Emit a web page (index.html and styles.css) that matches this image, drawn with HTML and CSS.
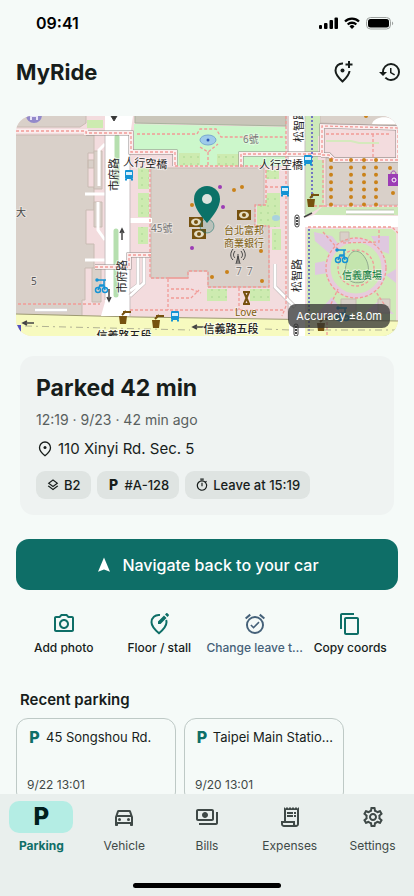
FILE: index.html
```html
<!DOCTYPE html>
<html lang="en">
<head>
    <meta charset="UTF-8">
    <meta name="viewport" content="width=device-width, initial-scale=1.0">
    <title>MyRide</title>
    <link rel="stylesheet" href="styles.css">
</head>
<body>
    <div class="status-bar">
        <span class="time">09:41</span>
        <svg class="status-icons" viewBox="0 0 76 14" aria-hidden="true">
            <rect x="0" y="9" width="3" height="4" rx="1"/>
            <rect x="5" y="7" width="3.500" height="6" rx="1"/>
            <rect x="10.500" y="4" width="3.500" height="9" rx="1"/>
            <rect x="15.500" y="1.500" width="3.500" height="11.500" rx="1"/>
            <g fill="none" stroke="#000" stroke-width="2.300">
                <path d="M26 5.500a10 10 0 0 1 14 0"/>
                <path d="M28.700 8.500a6.200 6.200 0 0 1 8.600 0"/>
            </g>
            <path d="M33 13l-2.500-2.600a3.500 3.500 0 0 1 5 0z"/>
            <rect x="47.500" y="1.500" width="24" height="11.500" rx="4" fill="none" stroke="#9da19f"/>
            <rect x="49" y="3" width="21" height="8.500" rx="2.500"/>
            <path d="M73 5.500c1.600.5 1.600 3.300 0 3.800z" fill="#9da19f"/>
        </svg>
    </div>

    <header class="app-bar">
        <h1>MyRide</h1>
        <button type="button" class="icon-button" aria-label="Add parking spot">
            <svg class="icon" viewBox="0 0 24 24"><path d="M13 3.500c-4.300-.3-7.500 2.700-7.500 7 0 3.400 2.500 6.800 7 11 4.300-4 6.800-7.400 7-10.500M19 1v7M15.500 4.500h7" fill="none" stroke="currentColor" stroke-width="2"/><circle cx="12.500" cy="10.500" r="2"/></svg>
        </button>
        <button type="button" class="icon-button" aria-label="History">
            <svg class="icon" viewBox="0 0 24 24"><path d="M13 3a9 9 0 0 0-9 9H1l4 4 4-4H6c0-3.870 3.130-7 7-7s7 3.130 7 7-3.130 7-7 7c-1.930 0-3.680-.79-4.940-2.060l-1.420 1.420A8.950 8.950 0 0 0 13 21a9 9 0 0 0 0-18zm-1 5v5l4.280 2.540.72-1.210-3.500-2.080V8H12z"/></svg>
        </button>
    </header>

    <main>
        <section class="map" aria-label="Parking location">
            <svg class="map-tiles" viewBox="16 116 382 220" preserveAspectRatio="xMidYMid slice">
                <defs>
                    <g id="bus"><rect x="-4" y="-5" width="8" height="9" rx="1" fill="#1593d4"/><path d="M-3-3h6v3h-6z" fill="#d6effb"/><path d="M-3 4v1.500M3 4v1.500" stroke="#1593d4" stroke-width="2"/></g>
                    <g id="bike" fill="none" stroke="#1593d4" stroke-width="1.500"><circle cx="-3" cy="4" r="2.500"/><circle cx="4" cy="4" r="2.500"/><path d="M-3 4l2-5h4l1 5M-2 0h5M-5-6h10M3-6v5"/><circle cx="-4" cy="-6" r="1"/></g>
                    <g id="money"><rect x="-7" y="-5" width="14" height="10" fill="#76510f"/><ellipse rx="5" ry="3.500" fill="#e5ddc4"/><circle r="2" fill="#76510f"/></g>
                    <g id="cup" fill="#76510f"><path d="M-4 0h8L3 8h-6z"/><path d="M-1-1l4-4M0-4h8" stroke="#76510f" stroke-width="2"/></g>
                    <g id="light"><rect x="-2" y="-6" width="4" height="12" rx="2" fill="#fff" stroke="#444"/><path d="M0-4v8" stroke="#444" stroke-width="2" stroke-dasharray="2 1"/></g>
                    <pattern id="trees" width="7" height="7" patternUnits="userSpaceOnUse"><rect width="7" height="7" fill="#cdebb0"/><circle cx="2" cy="3" r=".8" fill="#a5d68f"/></pattern>
                </defs>
                <path d="M16 116h382v220H16z" fill="#f3dcde"/>

                <!-- buildings on the west block -->
                <g fill="#d9d0c9" stroke="#c8bbb2">
                    <path d="M10 110h76v13l-6 4H10z"/>
                    <path d="M10 135h84v18h-6v15h6v-8h-6v27h6v23h-8v34h8v24h-9v32h-3v17h-6v3H10z"/>
                    <path d="M94 151h8v38h-8zM94 202h8v25h-8zM92 268h9v34h-9z"/>
                </g>
                <path d="M87 120h16v8H87z" fill="#cdebb0"/>
                <path d="M99 186v-36l6-6M98 202v28l7 10M85 194h20M85 260h20" fill="none" stroke="#fff" stroke-width="3"/>

                <!-- park -->
                <path d="M134 124l152 3v39h-111v-14h-41z" fill="#ccf7cb"/>
                <path d="M135 110h151v16l-151-3z" fill="#c9c5b9" stroke="#a9b39e"/>
                <path d="M179 153h21v12h-21zM217 154h26v12h-26zM138 168h11v21h-11zM138 193h11v24h-11zM138 227h10v17h-10zM266 170h13v9h-13z" fill="url(#trees)"/>
                <path d="M267 193h13v34h-23v-22h8zM272 229h9v21h-9zM207 289h20v12h-20zM250 289h20v12h-20z" fill="url(#trees)"/>
                <ellipse cx="208" cy="140" rx="8" ry="5" fill="#9ecbea" stroke="#78a9d0"/>
                <circle cx="208" cy="140" r="1.500" fill="#2754b3"/>
                <ellipse cx="276" cy="218" rx="4" ry="3" fill="#a9d2df"/>

                <!-- central building -->
                <path d="M151 168h113v37h-9v21h14v61h-61v-16h-20v7h-37z" fill="#d9d0c9" stroke="#c8bbb2"/>

                <!-- east block -->
                <g fill="#d9d0c9" stroke="#c8bbb2">
                    <path d="M320 110h85v16l-85-3z"/>
                    <path d="M326 158h74v47h-74z"/>
                </g>
                <path d="M305 116h15v20h-2v24h6v45l-19 12z" fill="#cde9ba"/>
                <path d="M326 141h25l8 2h20" stroke="#d5e9bd" stroke-width="2" fill="none"/>
                <path d="M372 124c2-9 22-9 24 0z" fill="#fff"/>
                <path d="M322 207h76v8h-84z" fill="#cde9ba"/>

                <!-- plaza -->
                <path d="M307 229h85l4 4v103h-89z" fill="#cfebb8"/>
                <path d="M314 232l18 4 8 10-10 8-15-13zM315 263l10-2 3 12-13 2zM371 236h18v18l-10-4zM386 275l10-6v14zM320 310l12-13 12 16-30 6zM365 312l15-12 14 14z" fill="#dfc8e0"/>
                <circle cx="356" cy="268" r="28" fill="none" stroke="#e7cbdc" stroke-width="5"/>
                <path d="M345 272c2-19 8-24 16-19 9 8 10 22 2 29-12 3-16-3-18-10z" fill="#c4e5ae" stroke="#91a98f"/>
                <path d="M340 232h9v9h-9zM341 299h15v12h-15zM378 299h12v14h-12z" fill="#d9d0c9" stroke="#c8bbb2"/>

                <!-- roads -->
                <path d="M16 314l120 3 262 4v15H16z" fill="#f7fabf"/>
                <path d="M16 314l120 3 262 4" stroke="#9d9a72" fill="none"/>
                <g fill="#fff">
                    <path d="M105 116h28l-3 20v180h-29l4-14zM289 116h16v220h-16z"/>
                    <path d="M128 218h24v5h-24zM300 219l14-4 84 1v11h-98z"/>
                </g>
                <path d="M288 116v203M305 116v98M105 135v165M130 136v180" stroke="#c8bfc0" fill="none"/>
                <path d="M144 257v26l-14 13M138 256v29l-8 6M35 310h32M275 264v23l20 20" fill="none" stroke="#b9b0b0" stroke-width="4"/>
                <path d="M144 257v26l-14 13M138 256v29l-8 6M35 310h32M275 264v23l20 20" fill="none" stroke="#fff" stroke-width="3"/>
                <path d="M346 212h48" stroke="#b9c4ac" stroke-width="5"/>
                <path d="M346 212h48" stroke="#fff" stroke-width="3"/>
                <path d="M117 137v46M116 231v64" stroke="#b6dfaf" stroke-width="5" stroke-linecap="round"/>

                <!-- covered walkways -->
                <g fill="none" stroke="#8d8786" stroke-width="5">
                    <path d="M86 133h45v19h44v14M95 267h34v-12h22M241 167v-13h81v-28l76 2v32h-64l-5-5h-8"/>
                </g>
                <g fill="none" stroke="#fbeeee" stroke-width="4">
                    <path d="M16 131h70v2h45v19h44v14M95 267h34v-12h22M241 167v-13h81v-28l76 2v32h-64l-5-5h-8"/>
                </g>
                <g fill="none" stroke="#f29a97" stroke-width="1.300" stroke-dasharray="3 2">
                    <path d="M16 131h70v2h45v19h44v14M95 267h34v-12h22M241 167v-13h81v-28l76 2v32h-64l-5-5h-8"/>
                    <path d="M137 134h60l3-5h16l5 8h65M200 147l8 5 10-8M208 152v14M175 166h91v39h-11v21h14v61h-61v-16h-20v7h-38V168M286 116v190l-4 10M187 278h-19v32M130 310h154M18 304h82M239 288v22M265 187h20"/>
                    <path d="M323 160v47M326 134h65M373 134v24M314 206h84M308 227h84l6 6M323 232l15 17M331 304l7-15M379 230v12l-38 1M384 304l-8-12M327 335v-22"/>
                    <circle cx="356" cy="268" r="30"/><circle cx="356" cy="268" r="18"/>
                    <path d="M171 289h20l10 4M171 298h20l8-8"/>
                </g>
                <path d="M309 229v105M312 116v85" fill="none" stroke="#544fc4" stroke-width="1.500" stroke-dasharray="2 2"/>
                <path d="M25 326l165 4M265 329l25 1M307 330h90" fill="none" stroke="#b1b293" stroke-dasharray="7 4 2 4"/>

                <!-- street trees and other points -->
                <g fill="none" stroke="#ca821a" stroke-width="4" stroke-linecap="round" stroke-dasharray="0 7.400">
                    <path d="M331 160v45M351 160v45M364 160v45M376 160v45"/>
                </g>
                <g fill="#ca821a">
                    <circle cx="192" cy="205" r="2"/><circle cx="234" cy="190" r="2"/><circle cx="242" cy="187" r="2"/><circle cx="212" cy="277" r="2"/><circle cx="227" cy="272" r="2"/><circle cx="261" cy="251" r="2"/><circle cx="262" cy="281" r="2"/><circle cx="366" cy="116" r="2"/><circle cx="393" cy="193" r="2"/><circle cx="390" cy="168" r="2"/>
                </g>
                <g fill="#9c3cb5"><circle cx="220" cy="187" r="2"/><circle cx="223" cy="207" r="2"/><circle cx="192" cy="248" r="2"/><path d="M388 174h10v12h-10z"/><circle cx="34" cy="115" r="8" fill="#9389ca"/></g>
                <path d="M391 174c0-4 5-4 5 0" fill="none" stroke="#9c3cb5"/>
                <circle cx="394" cy="180" r="2" fill="none" stroke="#fff"/>
                <path d="M31 112v8m0-4h6m0-4v8" stroke="#e9e3f7" stroke-width="2" fill="none"/>
                <path d="M17 325h4v8z" fill="#544fc4"/>

                <use href="#bus" x="129" y="175"/><use href="#bus" x="308" y="160"/><use href="#bus" x="285" y="191"/><use href="#bus" x="175" y="316"/>
                <use href="#bike" x="101" y="286"/><use href="#bike" x="341" y="256"/><use href="#bike" x="342" y="314"/>
                <use href="#money" x="196" y="222"/><use href="#money" x="199" y="234"/><use href="#money" x="244" y="215"/>
                <use href="#cup" x="123" y="316"/><use href="#cup" x="156" y="320"/><use href="#cup" x="311" y="199"/><use href="#cup" x="321" y="323"/>
                <use href="#light" x="297" y="221"/><use href="#light" x="296" y="330"/>
                <g fill="none" stroke="#444">
                    <path d="M111 116h6l-3 5z" fill="#333"/>
                    <path d="M122 240v-10m-2 3l2-4 2 4M109 289v11m-2-3l2 4 2-4M34 323H23m4-2l-4 2 4 2M205 327h-12m4-2l-4 2 4 2M312 213l-8 4" stroke-width="1.500"/>
                    <path d="M238 254v10m-2 0l2-8 2 8M235 251c-2 3-2 5 0 7M241 251c2 3 2 5 0 7M233 249c-3 4-3 8 0 11M243 249c3 4 3 8 0 11"/>
                </g>
                <path d="M243 292h7M243 304h7M244 292l5 12M249 292l-5 12" stroke="#76510f" stroke-width="2"/>

                <g class="map-label">
                    <text x="145" y="167" transform="rotate(4 145 167)" text-anchor="middle">人行空橋</text>
                    <text x="281" y="169" text-anchor="middle">人行空橋</text>
                    <text x="231" y="333" text-anchor="middle" font-weight="500">信義路五段</text>
                    <text x="124" y="340" text-anchor="middle" font-weight="500">信義路五段</text>
                    <text x="118" y="191" transform="rotate(-90 118 191)">市府路</text>
                    <text x="126" y="293" transform="rotate(-90 126 293)">市府路</text>
                    <text x="303" y="142" transform="rotate(-90 303 142)">松智路</text>
                    <text x="301" y="292" transform="rotate(-90 301 292)">松智路</text>
                </g>
                <g class="place-label">
                    <text x="16" y="216" fill="#444">大</text>
                    <text x="31" y="285" fill="#555">5</text>
                    <text x="243" y="143" fill="#777">6號</text>
                    <text x="151" y="232" fill="#777">45號</text>
                    <text x="236" y="275" fill="#777">7</text>
                    <text x="247" y="275" fill="#777">7</text>
                    <text x="244" y="234" fill="#80600f" text-anchor="middle">台北富邦</text>
                    <text x="244" y="247" fill="#80600f" text-anchor="middle">商業銀行</text>
                    <text x="246" y="316" fill="#80600f" text-anchor="middle">Love</text>
                    <text x="362" y="279" fill="#137b42" text-anchor="middle">信義廣場</text>
                </g>

                <!-- parked car -->
                <circle cx="207" cy="226" r="7" fill="#0e6e67" fill-opacity=".15" stroke="#0e6e67" stroke-opacity=".5"/>
                <path d="M207 223c-7-8-13-16-13-24a13 13 0 0 1 26 0c0 8-6 16-13 24z" fill="#0b7268"/>
                <circle cx="207" cy="199" r="5" fill="#dce3de"/>
            </svg>
            <span class="accuracy">Accuracy ±8.0m</span>
        </section>

        <section class="parked">
            <h2>Parked 42 min</h2>
            <p class="since">12:19 · 9/23 · 42 min ago</p>
            <p class="address">
                <svg class="icon" viewBox="0 0 18 18" aria-hidden="true"><path d="M9 2a5.500 5.500 0 0 0-5.500 5.700c0 2.700 2.100 5.300 5.500 8 3.400-2.700 5.500-5.300 5.500-8A5.500 5.500 0 0 0 9 2z" fill="none" stroke="currentColor" stroke-width="1.300"/><circle cx="9" cy="7.500" r="1.500"/></svg>
                110 Xinyi Rd. Sec. 5
            </p>
            <ul class="chips">
                <li>
                    <svg class="icon" viewBox="0 0 24 24" aria-hidden="true"><path d="M12 18.540l-7.370-5.730L3 14.070l9 7 9-7-1.630-1.270L12 18.540zM12 16l7.360-5.730L21 9l-9-7-9 7 1.630 1.270L12 16zm0-11.470L17.740 9 12 13.470 6.260 9 12 4.530z"/></svg>
                    B2
                </li>
                <li><span class="p-mark">P</span>#A-128</li>
                <li>
                    <svg class="icon" viewBox="0 0 24 24" aria-hidden="true"><path d="M15 1H9v2h6V1zm-4 13h2V8h-2v6zm8.030-6.610l1.420-1.420c-.43-.51-.9-.99-1.410-1.410l-1.420 1.420A8.960 8.960 0 0 0 12 4c-4.970 0-9 4.030-9 9s4.020 9 9 9a9 9 0 0 0 7.030-14.610zM12 20c-3.870 0-7-3.130-7-7s3.130-7 7-7 7 3.130 7 7-3.130 7-7 7z"/></svg>
                    Leave at 15:19
                </li>
            </ul>
        </section>

        <button type="button" class="navigate">
            <svg class="icon" viewBox="0 0 24 24" aria-hidden="true"><path d="M12 2L4 21l8-3 8 3z"/></svg>
            Navigate back to your car
        </button>

        <div class="actions">
            <button type="button">
                <svg class="icon" viewBox="0 0 24 24" aria-hidden="true"><path d="M14.120 4l1.830 2H20v12H4V6h4.050l1.830-2h4.240M15 2H9L7.170 4H4c-1.100 0-2 .9-2 2v12c0 1.100.9 2 2 2h16c1.100 0 2-.9 2-2V6c0-1.100-.9-2-2-2h-3.170L15 2zm-3 7c1.650 0 3 1.350 3 3s-1.350 3-3 3-3-1.350-3-3 1.350-3 3-3m0-2c-2.760 0-5 2.240-5 5s2.240 5 5 5 5-2.240 5-5-2.240-5-5-5z"/></svg>
                <span>Add photo</span>
            </button>
            <button type="button">
                <svg class="icon" viewBox="0 0 24 24" aria-hidden="true"><path d="M13 3C8 2.400 4.500 5.700 4.500 10.200c0 3.500 2.500 6.800 7.500 11 5-4.200 7.500-7.500 7.500-11 0-1-.1-1.500-.4-2.200" fill="none" stroke="currentColor" stroke-width="2"/><path d="M11 9.500V12h2.500l6-6L17 3.500zM18 2.500L20.500 5l1.200-1.200c.4-.4.4-.8 0-1.200l-1.300-1.300c-.4-.4-.8-.4-1.200 0z"/></svg>
                <span>Floor / stall</span>
            </button>
            <button type="button" class="leave-time">
                <svg class="icon" viewBox="0 0 24 24" aria-hidden="true"><path d="M22 5.720l-4.600-3.860-1.290 1.530 4.600 3.860L22 5.720zM7.880 3.390L6.600 1.860 2 5.710l1.290 1.530 4.590-3.850zM12 4a9 9 0 1 0 0 18 9 9 0 0 0 0-18zm0 16c-3.870 0-7-3.130-7-7s3.130-7 7-7 7 3.130 7 7-3.130 7-7 7zM10.540 14.530L8.410 12.400l-1.060 1.060 3.180 3.180 6-6-1.060-1.060-4.930 4.950z"/></svg>
                <span>Change leave t…</span>
            </button>
            <button type="button">
                <svg class="icon" viewBox="0 0 24 24" aria-hidden="true"><path d="M16 1H4c-1.100 0-2 .9-2 2v14h2V3h12V1zm3 4H8c-1.100 0-2 .9-2 2v14c0 1.100.9 2 2 2h11c1.100 0 2-.9 2-2V7c0-1.100-.9-2-2-2zm0 16H8V7h11v14z"/></svg>
                <span>Copy coords</span>
            </button>
        </div>

        <h3>Recent parking</h3>
        <div class="recent">
            <article>
                <p class="place"><span class="p-mark">P</span><span>45 Songshou Rd.</span></p>
                <p class="date">9/22 13:01</p>
            </article>
            <article>
                <p class="place"><span class="p-mark">P</span><span>Taipei Main Statio…</span></p>
                <p class="date">9/20 13:01</p>
            </article>
        </div>
    </main>

    <nav class="tab-bar">
        <a href="#parking" class="active">
            <span class="tab-icon"><span class="p-mark">P</span></span>
            Parking
        </a>
        <a href="#vehicle">
            <span class="tab-icon"><svg class="icon" viewBox="0 0 24 24" aria-hidden="true"><path d="M18.920 6.010C18.720 5.420 18.160 5 17.500 5h-11c-.66 0-1.210.42-1.420 1.010L3 12v8c0 .55.45 1 1 1h1c.55 0 1-.45 1-1v-1h12v1c0 .55.45 1 1 1h1c.55 0 1-.45 1-1v-8l-2.080-5.990zM6.850 7h10.290l1.080 3.110H5.770L6.850 7zM19 17H5v-5h14v5z"/><circle cx="7.500" cy="14.500" r="1.500"/><circle cx="16.500" cy="14.500" r="1.500"/></svg></span>
            Vehicle
        </a>
        <a href="#bills">
            <span class="tab-icon"><svg class="icon" viewBox="0 0 24 24" aria-hidden="true"><path d="M19 14V6c0-1.100-.9-2-2-2H3c-1.100 0-2 .9-2 2v8c0 1.100.9 2 2 2h14c1.100 0 2-.9 2-2zm-2 0H3V6h14v8zm-7-7c-1.660 0-3 1.340-3 3s1.340 3 3 3 3-1.340 3-3-1.340-3-3-3zm13 0v11c0 1.100-.9 2-2 2H4v-2h17V7h2z"/></svg></span>
            Bills
        </a>
        <a href="#expenses">
            <span class="tab-icon"><svg class="icon" viewBox="0 0 24 24" aria-hidden="true"><path d="M19.500 3.500L18 2l-1.500 1.500L15 2l-1.500 1.500L12 2l-1.500 1.500L9 2 7.500 3.500 6 2v14H3v3c0 1.660 1.340 3 3 3h12c1.660 0 3-1.340 3-3V2l-1.500 1.500zM15 20H6c-.55 0-1-.45-1-1v-1h10v2zm4-1c0 .55-.45 1-1 1s-1-.45-1-1v-3H8V5h11v14z"/><path d="M9 7h6v2H9zM16 7h2v2h-2zM9 10h6v2H9zM16 10h2v2h-2z"/></svg></span>
            Expenses
        </a>
        <a href="#settings">
            <span class="tab-icon"><svg class="icon" viewBox="0 0 24 24" aria-hidden="true"><path d="M19.430 12.980c.04-.32.07-.64.07-.98s-.03-.66-.07-.98l2.110-1.650c.19-.15.24-.42.12-.64l-2-3.460a.5.5 0 0 0-.61-.22l-2.490 1c-.52-.4-1.080-.73-1.690-.98l-.38-2.650A.49.49 0 0 0 14 2h-4c-.25 0-.46.18-.49.42l-.38 2.650c-.61.25-1.170.59-1.690.98l-2.490-1a.5.5 0 0 0-.61.22l-2 3.460c-.13.22-.07.49.12.64l2.110 1.650c-.04.32-.07.65-.07.98s.03.66.07.98l-2.110 1.650c-.19.15-.24.42-.12.64l2 3.460c.12.22.39.3.61.22l2.490-1c.52.4 1.080.73 1.690.98l.38 2.650c.03.24.24.42.49.42h4c.25 0 .46-.18.49-.42l.38-2.650c.61-.25 1.170-.59 1.690-.98l2.490 1c.23.09.49 0 .61-.22l2-3.460c.12-.22.07-.49-.12-.64l-2.110-1.650zm-1.980-1.710c.04.31.05.52.05.73s-.02.43-.05.73l-.14 1.130.89.7 1.080.84-.7 1.210-1.270-.51-1.040-.42-.9.68c-.43.32-.84.56-1.250.73l-1.060.43-.16 1.130-.2 1.350h-1.400l-.19-1.350-.16-1.130-1.060-.43c-.43-.18-.83-.41-1.230-.71l-.91-.7-1.060.43-1.270.51-.7-1.210 1.080-.84.89-.7-.14-1.130c-.03-.31-.05-.54-.05-.74s.02-.43.05-.73l.14-1.130-.89-.7-1.080-.84.7-1.210 1.270.51 1.040.42.9-.68c.43-.32.84-.56 1.250-.73l1.060-.43.16-1.130.2-1.350h1.390l.19 1.350.16 1.130 1.060.43c.43.18.83.41 1.230.71l.91.7 1.060-.43 1.270-.51.7 1.210-1.070.85-.89.7.14 1.130zM12 8c-2.210 0-4 1.790-4 4s1.790 4 4 4 4-1.790 4-4-1.790-4-4-4zm0 6c-1.100 0-2-.9-2-2s.9-2 2-2 2 .9 2 2-.9 2-2 2z"/></svg></span>
            Settings
        </a>
        <div class="home-indicator"></div>
    </nav>
</body>
</html>
```

FILE: styles.css
```css
* {
    box-sizing: border-box;
}

body {
    display: flex;
    flex-direction: column;
    height: 100vh;
    margin: 0;
    font-family: Inter, "Noto Sans CJK TC", sans-serif;
    background-color: #f5faf8;
    color: #171d1b;
}

h1, h2, h3, p, ul {
    margin: 0;
    padding: 0;
}

button {
    border: none;
    background: none;
    padding: 0;
    font-family: inherit;
    color: inherit;
    cursor: pointer;
}

.icon {
    display: block;
    flex: none;
    width: 24px;
    height: 24px;
    fill: currentColor;
}

.p-mark {
    font-weight: 800;
    text-align: center;
}

/* top */
.status-bar {
    display: flex;
    flex: none;
    align-items: center;
    justify-content: space-between;
    height: 44px;
    padding: 2px 19px 0 36px;
    color: #000;
}

.time {
    font-size: 16px;
    font-weight: 600;
}

.status-icons {
    width: 76px;
    height: 14px;
}

.app-bar {
    display: flex;
    flex: none;
    align-items: center;
    height: 56px;
    padding-left: 16px;
}

.app-bar h1 {
    flex: 1;
    font-size: 22px;
    font-weight: 700;
}

.icon-button {
    display: grid;
    place-items: center;
    width: 48px;
    height: 48px;
}

main {
    flex: 1;
    min-height: 0;
    overflow-y: auto;
    padding: 16px;
    scrollbar-width: none;
}

/* map */
.map {
    position: relative;
    overflow: hidden;
    border-radius: 16px;
}

.map-tiles {
    display: block;
    width: 100%;
    height: 220px;
}

.map-label {
    font-family: "Noto Sans CJK TC", sans-serif;
    font-size: 11px;
    fill: #222;
    stroke: #fff;
    stroke-width: 2px;
    stroke-opacity: 0.6;
    paint-order: stroke;
}

.place-label {
    font-family: "Noto Sans", "Noto Sans CJK TC", sans-serif;
    font-size: 10px;
    stroke: #fff;
    stroke-width: 2px;
    stroke-opacity: 0.4;
    paint-order: stroke;
}

.accuracy {
    position: absolute;
    right: 8px;
    bottom: 8px;
    padding: 4px 8px;
    border-radius: 8px;
    background-color: rgba(50, 50, 50, 0.75);
    color: #fff;
    font-size: 11px;
    line-height: 16px;
}

/* parked card */
.parked {
    margin: 20px 4px 24px;
    padding: 16px;
    border-radius: 14px;
    background-color: #eff3f2;
}

.parked h2 {
    font-size: 23px;
    font-weight: 700;
    line-height: 32px;
}

.since {
    margin-top: 6px;
    font-size: 14px;
    line-height: 20px;
    color: #59605e;
}

.address {
    display: flex;
    align-items: center;
    gap: 4px;
    margin-top: 8px;
    font-size: 15px;
    line-height: 22px;
}

.address .icon {
    width: 18px;
    height: 18px;
}

.chips {
    display: flex;
    flex-wrap: wrap;
    gap: 6px;
    margin-top: 11px;
    list-style: none;
}

.chips li {
    display: flex;
    align-items: center;
    gap: 4px;
    height: 28px;
    padding: 0 10px;
    border-radius: 9px;
    background-color: #dfe4e2;
    font-size: 13px;
    font-weight: 500;
}

.chips .icon, .chips .p-mark {
    width: 14px;
    height: 14px;
    line-height: 14px;
}

.chips .p-mark {
    font-size: 14px;
}

.navigate {
    display: flex;
    align-items: center;
    justify-content: center;
    gap: 9px;
    width: 100%;
    height: 51px;
    border-radius: 13px;
    background-color: #0e6e67;
    color: #fff;
    font-size: 16px;
    font-weight: 500;
}

.navigate .icon {
    width: 18px;
    height: 18px;
}

/* quick actions */
.actions {
    display: grid;
    grid-template-columns: repeat(4, minmax(0, 1fr));
    margin-top: 22px;
}

.actions button {
    display: flex;
    flex-direction: column;
    align-items: center;
    gap: 4px;
    font-size: 12px;
    font-weight: 500;
    line-height: 16px;
    white-space: nowrap;
}

.actions .icon {
    color: #0e6e67;
}

.actions .leave-time, .actions .leave-time .icon {
    color: #456179;
}

/* recent parking */
h3 {
    margin: 34px 4px 8px;
    font-size: 15px;
    font-weight: 600;
    line-height: 20px;
}

.recent {
    display: flex;
    gap: 8px;
    overflow-x: auto;
    scrollbar-width: none;
}

.recent article {
    display: flex;
    flex: none;
    flex-direction: column;
    justify-content: space-between;
    width: 160px;
    height: 86px;
    padding: 10px;
    border: 1px solid #bec9c6;
    border-radius: 12px;
}

.place {
    display: flex;
    align-items: center;
    gap: 4px;
    font-size: 13px;
    line-height: 16px;
    white-space: nowrap;
}

.place .p-mark {
    width: 15px;
    font-size: 16px;
    color: #0e6e67;
}

.date {
    font-size: 12px;
    line-height: 16px;
    color: #3f4947;
}

/* bottom tabs */
.tab-bar {
    display: grid;
    flex: none;
    grid-template-columns: repeat(5, 1fr);
    padding: 7px 0 8px;
    background-color: #e9efed;
}

.tab-bar a {
    display: flex;
    flex-direction: column;
    align-items: center;
    gap: 5px;
    color: #3f4947;
    font-size: 12px;
    line-height: 16px;
    text-decoration: none;
}

.tab-icon {
    display: grid;
    place-items: center;
    width: 64px;
    height: 32px;
    border-radius: 10px;
}

.tab-bar .active {
    color: #0e6e67;
    font-weight: 700;
}

.active .tab-icon {
    background-color: #b4ede4;
    color: #00201d;
}

.active .p-mark {
    font-size: 24px;
    line-height: 32px;
}

.home-indicator {
    grid-column: 1 / -1;
    justify-self: center;
    width: 148px;
    height: 5px;
    margin-top: 29px;
    border-radius: 3px;
    background-color: #000;
}
```
